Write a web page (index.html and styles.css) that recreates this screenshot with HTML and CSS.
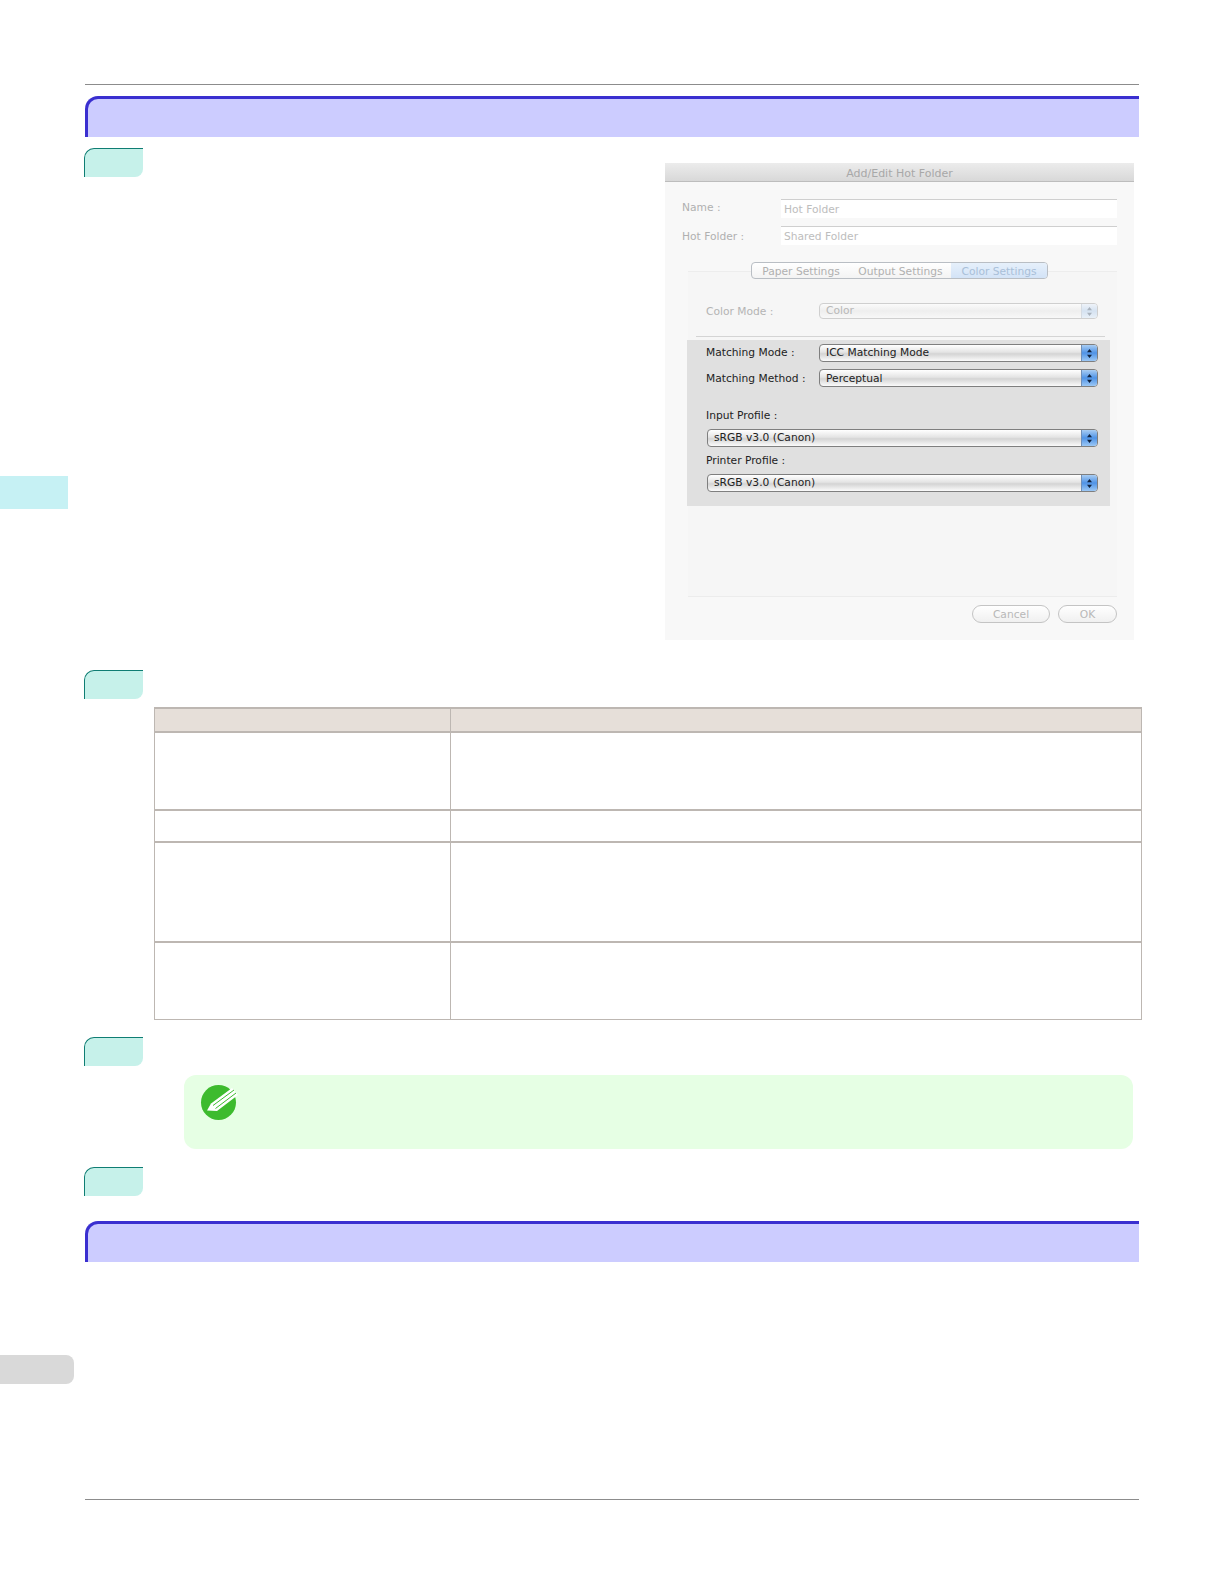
FILE: index.html
```html
<!DOCTYPE html>
<html lang="en">
<head>
<meta charset="utf-8">
<title>Add/Edit Hot Folder</title>
<link rel="stylesheet" href="styles.css">
</head>
<body>
<div class="page">
  <div class="side-tab side-tab-chapter"></div>
  <div class="side-tab side-tab-page"></div>
  <div class="rule"></div>
  <div class="heading heading-first"></div>
  <div class="step-row">
    <div class="step"></div>
    <div class="dialog">
      <div class="titlebar">Add/Edit Hot Folder</div>
      <div class="dialog-body">
        <div class="field">
          <span class="field-label field-label-up">Name :</span>
          <span class="input">Hot Folder</span>
        </div>
        <div class="field field-next">
          <span class="field-label field-label-down">Hot Folder :</span>
          <span class="input">Shared Folder</span>
        </div>
        <div class="tabbox">
          <div class="tabs">
            <span class="tab tab-paper">Paper Settings</span>
            <span class="tab tab-output">Output Settings</span>
            <span class="tab tab-color">Color Settings</span>
          </div>
          <div class="mode-row">
            <span class="mode-label">Color Mode :</span>
            <div class="select select-off">
              <span class="select-text">Color</span>
              <span class="stepper"><svg width="7" height="11" viewBox="0 0 7 11"><path d="M3.5 1 6 4.2H1zM3.5 10 6 6.8H1z"/></svg></span>
            </div>
          </div>
          <div class="divider"></div>
          <div class="panel">
            <div class="panel-row">
              <span class="mode-label mode-label-on">Matching Mode :</span>
              <div class="select">
                <span class="select-text">ICC Matching Mode</span>
                <span class="stepper"><svg width="7" height="11" viewBox="0 0 7 11"><path d="M3.5 1 6 4.2H1zM3.5 10 6 6.8H1z"/></svg></span>
              </div>
            </div>
            <div class="panel-row panel-row-next">
              <span class="mode-label mode-label-on">Matching Method :</span>
              <div class="select">
                <span class="select-text">Perceptual</span>
                <span class="stepper"><svg width="7" height="11" viewBox="0 0 7 11"><path d="M3.5 1 6 4.2H1zM3.5 10 6 6.8H1z"/></svg></span>
              </div>
            </div>
            <div class="stack-label stack-label-input">Input Profile :</div>
            <div class="select select-wide">
              <span class="select-text">sRGB v3.0 (Canon)</span>
              <span class="stepper"><svg width="7" height="11" viewBox="0 0 7 11"><path d="M3.5 1 6 4.2H1zM3.5 10 6 6.8H1z"/></svg></span>
            </div>
            <div class="stack-label stack-label-printer">Printer Profile :</div>
            <div class="select select-wide">
              <span class="select-text">sRGB v3.0 (Canon)</span>
              <span class="stepper"><svg width="7" height="11" viewBox="0 0 7 11"><path d="M3.5 1 6 4.2H1zM3.5 10 6 6.8H1z"/></svg></span>
            </div>
          </div>
        </div>
        <div class="buttons">
          <span class="btn btn-cancel">Cancel</span>
          <span class="btn btn-ok">OK</span>
        </div>
      </div>
    </div>
  </div>
  <div class="step"></div>
  <table class="grid">
    <colgroup><col class="col-a"><col></colgroup>
    <tr class="row-head"><th></th><th></th></tr>
    <tr class="row-a"><td></td><td></td></tr>
    <tr class="row-b"><td></td><td></td></tr>
    <tr class="row-c"><td></td><td></td></tr>
    <tr class="row-d"><td></td><td></td></tr>
  </table>
  <div class="step step-three"></div>
  <div class="note">
    <svg class="note-icon" width="35" height="35" viewBox="0 0 35 35">
      <circle cx="17.5" cy="17.5" r="17.5" fill="#3dbb2e"/>
      <path d="M6 25.5 10 18.5 31 3 37 10 16 26Z" fill="#fff"/>
      <path d="M12 20.5 33 5M14.5 23.5 35 8" stroke="#3dbb2e" stroke-width="1" fill="none"/>
    </svg>
  </div>
  <div class="step step-four"></div>
  <div class="heading heading-second"></div>
  <div class="rule rule-foot"></div>
</div>
</body>
</html>
```

FILE: styles.css
```css
* { box-sizing: border-box; }
html, body { margin: 0; padding: 0; background: #fff; }
.page {
  position: relative;
  display: flex;
  flex-direction: column;
  width: 1224px;
  height: 1584px;
  padding: 84px 85px;
  font-family: "DejaVu Sans", sans-serif;
}
.rule { height: 1px; background: #8c8c8c; flex: none; }
.rule-foot { margin-top: auto; }
.side-tab { position: absolute; left: 0; }
.side-tab-chapter { top: 476px; width: 68px; height: 33px; background: #c6f1f4; }
.side-tab-page { top: 1355px; width: 74px; height: 29px; background: #d9d9d9; border-radius: 0 8px 8px 0; }

.heading {
  flex: none;
  height: 41px;
  background: #ccccff;
  border-top: 3px solid #3a2fd0;
  border-left: 3px solid #3a2fd0;
  border-top-left-radius: 13px;
}
.heading-first { margin-top: 11px; }
.heading-second { margin-top: 25px; }

.step {
  flex: none;
  width: 59px;
  height: 29px;
  margin-left: -1px;
  background: #c6f1ea;
  border-top: 1px solid #0f7d73;
  border-left: 1px solid #0f7d73;
  border-radius: 10px 0 8px 0;
}
.step-three { margin-top: 17px; }
.step-four { margin-top: 18px; }

.step-row {
  flex: none;
  display: flex;
  justify-content: space-between;
  align-items: flex-start;
  height: 522px;
  margin-top: 11px;
}

.dialog {
  width: 469px;
  height: 477px;
  margin-top: 15px;
  margin-right: 5px;
  background: #f8f8f8;
  font-size: 10.7px;
  color: #b4b4b4;
}
.titlebar {
  height: 19px;
  line-height: 21px;
  font-size: 11px;
  text-align: center;
  background: linear-gradient(#ececec, #d8d8d8);
  border-bottom: 1px solid #bdbdbd;
  color: #a8a8a8;
}
.dialog-body { padding: 17px 17px 0; }
.field { display: flex; align-items: center; height: 19px; }
.field-next { margin-top: 8px; }
.field-label { width: 99px; flex: none; color: #b0b0b0; }
.field-label-up { margin-bottom: 2px; }
.field-label-down { margin-top: 2px; }
.input {
  flex: 1;
  height: 19px;
  line-height: 19px;
  padding-left: 3px;
  background: #fff;
  border-top: 1px solid #cfcfcf;
  color: #bdbdbd;
}

.tabbox {
  height: 335px;
  margin-top: 17px;
  margin-left: 6px;
  border-bottom: 1px solid #ececec;
  background:
    linear-gradient(#ededed, #ededed) 0 9px / 100% 1px no-repeat,
    linear-gradient(#f6f6f6, #f6f6f6) 0 10px / 100% 100% no-repeat;
}
.tabs {
  display: flex;
  width: 297px;
  height: 17px;
  margin-left: 63px;
  border: 1px solid #b9bec4;
  border-radius: 4px;
  background: linear-gradient(#fff, #f3f3f3);
  overflow: hidden;
  line-height: 17px;
  text-align: center;
  color: #b0b0b0;
}
.tab-paper { width: 98px; }
.tab-output { width: 101px; }
.tab-color { flex: 1; background: linear-gradient(#e6f0fb, #d3e3f7); color: #a9bfd8; }

.mode-row {
  display: flex;
  align-items: center;
  margin-top: 24px;
  padding-left: 18px;
  padding-right: 19px;
}
.mode-label { width: 113px; flex: none; color: #b4b4b4; }
.mode-label-on { color: #222; }
.divider { height: 1px; margin: 17px 12px 0 8px; background: #d4d4d4; }

.select {
  position: relative;
  flex: 1;
  height: 18px;
  line-height: 15px;
  padding-left: 6px;
  color: #222;
  border: 1px solid #7f7f7f;
  border-radius: 4px;
  background: linear-gradient(#fff 0%, #e4e4e4 45%, #d4d4d4 55%, #fbfbfb 100%);
  overflow: hidden;
}
.panel-row-next .select { line-height: 17px; }
.select-off {
  height: 16px;
  line-height: 14px;
  color: #b8b8b8;
  border-color: #cfcfcf;
  background: linear-gradient(#fbfbfb, #eeeeee 50%, #f8f8f8);
}
.select-wide { flex: none; margin-left: 1px; }
.stepper {
  position: absolute;
  top: 0;
  right: 0;
  bottom: 0;
  width: 16px;
  display: flex;
  align-items: center;
  justify-content: center;
  background: linear-gradient(#a9cdf3, #4f93e6 50%, #9cc8f5);
  fill: #10233f;
  border-left: 1px solid #6f8fb8;
}
.select-off .stepper {
  background: linear-gradient(#eef3f9, #d5e2f1 50%, #e8f0f8);
  fill: #a9b2bd;
  border-left-color: #d5dbe2;
}

.panel {
  height: 166px;
  margin: 3px 7px 0 -1px;
  padding: 4px 12px 0 19px;
  background: #e0e0e0;
}
.panel-row { display: flex; align-items: center; }
.panel-row-next { margin-top: 7px; }
.panel-row .mode-label { margin-bottom: 2px; }
.panel-row-next .mode-label { margin-bottom: 0; }
.stack-label { height: 16px; line-height: 18px; color: #222; }
.stack-label-input { margin-top: 20px; margin-bottom: 6px; }
.stack-label-printer { margin-top: 5px; margin-bottom: 6px; }

.buttons { display: flex; justify-content: flex-end; gap: 8px; margin-top: 8px; }
.btn {
  height: 18px;
  line-height: 18px;
  text-align: center;
  border: 1px solid #c4c4c4;
  border-radius: 9px;
  background: linear-gradient(#fff, #f0f0f0);
  color: #b8b8b8;
}
.btn-cancel { width: 78px; }
.btn-ok { width: 59px; }

.grid {
  flex: none;
  width: 988px;
  margin-top: 8px;
  margin-left: 69px;
  table-layout: fixed;
  border-collapse: collapse;
}
.grid th, .grid td { padding: 0; border: 1px solid #bdb7b2; }
.grid tr + tr td { border-top-width: 2px; }
.grid th { background: #e6dfd9; border-top-width: 2px; }
.col-a { width: 296px; }
.row-head { height: 24px; }
.row-a { height: 78px; }
.row-b { height: 32px; }
.row-c { height: 100px; }
.row-d { height: 77px; }

.note {
  flex: none;
  width: 949px;
  height: 74px;
  margin-top: 9px;
  margin-left: 99px;
  padding: 10px 0 0 17px;
  background: #e6ffe4;
  border-radius: 12px;
}
.note-icon { display: block; overflow: visible; }
```
